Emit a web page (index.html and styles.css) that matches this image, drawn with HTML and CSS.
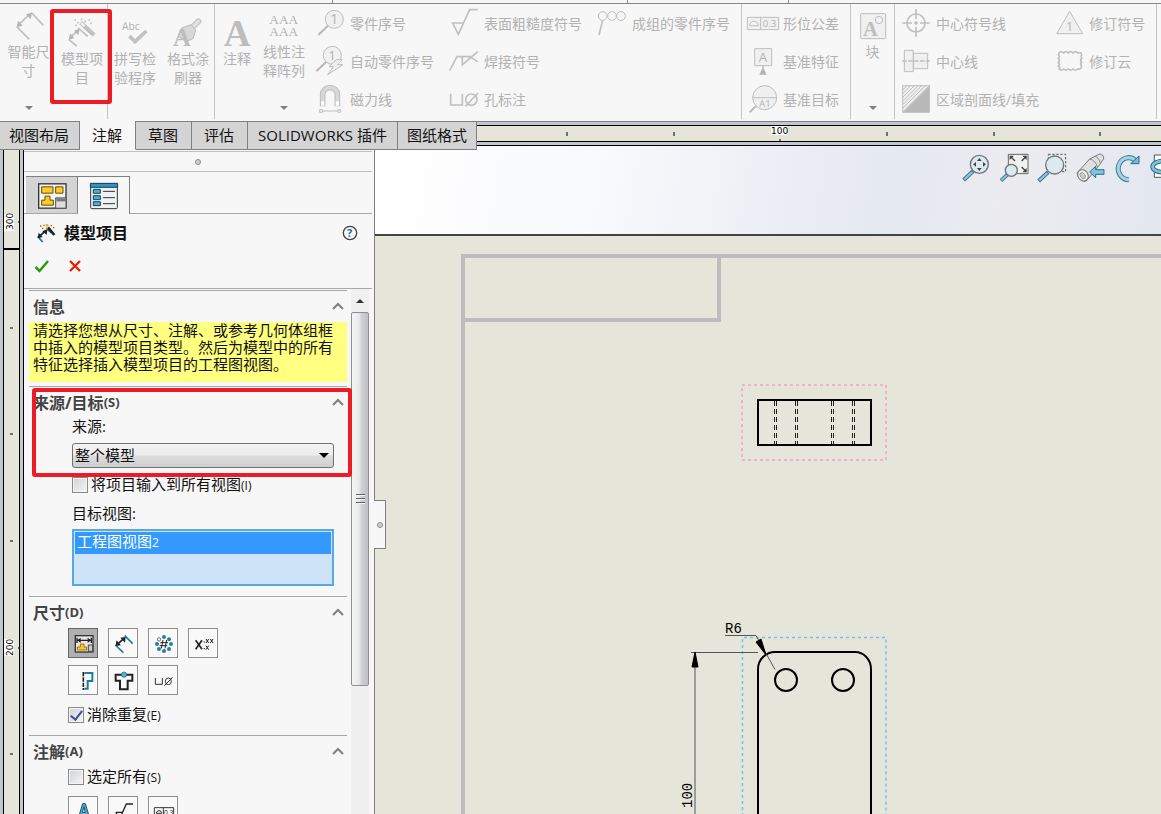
FILE: index.html
```
<!DOCTYPE html>
<html lang="zh-CN">
<head>
<meta charset="utf-8">
<title>模型项目</title>
<link rel="stylesheet" href="styles.css">
</head>
<body>
<div class="app">
  <div class="menu-edge"><i></i><i></i><i></i><i></i></div>

  <div class="ribbon">
    <div class="group">
      <button class="big drop size-tool"><svg viewBox="40 33 90 90"><g class="line"><path d="M92 38L128 76M48 80L86 118M54 74L88 42"/></g><path class="fill" d="M48 82l4-20 14 15zM94 38l-4 20-14-15z"/></svg><span>智能尺寸</span></button>
      <button class="big model-tool"><svg viewBox="202 54 90 90"><g class="line"><path d="M207 118l24 20M236 84l28 25M212 112l22-20"/></g><path class="fill" d="M207 120l4-20 13 14zM240 86l-4 20-13-14z"/><path d="M243 68l40 37" stroke="#bdbdbd" stroke-width="13"/><path d="M244 69l11 10" stroke="#ececec" stroke-width="8"/><path d="M258 79l24 22" stroke="#d4d4d4" stroke-width="3"/><g class="dots"><path d="M224 60h5M232 68h5M243 58h5M254 64h5M266 60h5M272 70h5M226 76h5"/></g></svg><span>模型项目</span></button>
    </div>
    <div class="group">
      <button class="big"><svg viewBox="363 54 90 90"><text x="369" y="89" font-size="31">Abc</text><path d="M391 108l17 17 34-32" fill="none" stroke="#c2c2c2" stroke-width="11"/></svg><span>拼写检验程序</span></button>
      <button class="big brush-tool"><svg viewBox="522 54 90 90"><path d="M584 78l14-14" stroke="#c4c4c4" stroke-width="18" stroke-linecap="round"/><path d="M584 78l14-14" stroke="#e2e2e2" stroke-width="10" stroke-linecap="round"/><path d="M548 84l28-10 14 16-8 26-20 8-24-14z" fill="#d8d8d8" stroke="#bbb" stroke-width="3"/><text class="serif" x="522" y="139" font-size="74">A</text></svg><span>格式涂刷器</span></button>
    </div>
    <div class="group wide">
      <button class="big note-tool"><svg viewBox="669 54 90 90"><text class="serif" x="674" y="137" font-size="112">A</text></svg><span>注释</span></button>
      <button class="big drop array-tool"><svg viewBox="810 33 90 90"><g class="serif thin" font-size="40"><text x="811" y="73">AAA</text><text x="811" y="109">AAA</text></g></svg><span>线性注释阵列</span></button>
      <div class="stack lead">
        <button class="tool"><svg viewBox="48 27 90 90"><path d="M88 79L58 108" class="heavy"/><circle class="disc" cx="106" cy="61" r="27"/><text x="94" y="76" font-size="42">1</text></svg>零件序号</button>
        <button class="tool"><svg viewBox="48 141 90 90"><path d="M82 188L52 217" class="heavy"/><circle class="disc" cx="100" cy="169" r="27"/><text x="88" y="182" font-size="40">1</text><path class="disc" d="M112 182h18l-14 15h16l-46 30 18-24h-14z"/></svg>自动零件序号</button>
        <button class="tool"><svg viewBox="48 255 90 90"><path d="M71 322V286a22 20 0 0 1 44 0v36" fill="none" stroke="#bdbdbd" stroke-width="17"/><path d="M71 308V286a22 20 0 0 1 44 0v22" fill="none" stroke="#d8d8d8" stroke-width="11"/><path d="M66 307h10v13H66zM110 307h10v13h-10z" fill="#fff"/><path class="line3" d="M62 332h8v8h-8zM117 332h8v8h-8zM70 336h47"/></svg>磁力线</button>
      </div>
      <div class="stack">
        <button class="tool"><svg viewBox="450 27 90 90"><path class="line" d="M458 72h36M462 74l16 32 34-74h24"/></svg>表面粗糙度符号</button>
        <button class="tool"><svg viewBox="450 141 90 90"><path class="line" d="M452 215l22-42h46M490 174v24l46-40M514 174l22 14"/></svg>焊接符号</button>
        <button class="tool"><svg viewBox="450 255 90 90"><path class="line" d="M455 284v34h35v-34"/><circle class="line" cx="517" cy="302" r="17"/><path class="line" d="M499 322l38-40"/></svg>孔标注</button>
      </div>
      <div class="stack">
        <button class="tool"><svg viewBox="24 27 90 90"><path class="line" d="M41 64l-11 44"/><g class="line3"><circle cx="41" cy="51" r="13"/><circle cx="69" cy="51" r="13"/><circle cx="96" cy="51" r="13"/></g></svg>成组的零件序号</button>
      </div>
    </div>
    <div class="group wide lead">
      <div class="stack">
        <button class="tool"><svg viewBox="477 27 90 90"><path class="disc" d="M475 55h94v37h-94zM515 55v37M482 80h26a13 13 0 0 0-26 0z"/><text x="521" y="84" font-size="29">0.3</text></svg>形位公差</button>
        <button class="tool"><svg viewBox="477 141 90 90"><path class="disc" d="M497 149h51v51h-51z"/><text x="509" y="190" font-size="40">A</text><path class="fill" d="M520 200h4v8l9 19h-22l9-19z"/></svg>基准特征</button>
        <button class="tool"><svg viewBox="477 255 90 90"><path class="heavy" d="M500 322l-18 18"/><circle class="disc" cx="527" cy="296" r="36"/><path class="line3" d="M491 296h72"/><text x="511" y="324" font-size="28">A1</text></svg>基准目标</button>
      </div>
    </div>
    <div class="group">
      <button class="big drop block-tool"><svg viewBox="-3 33 90 90"><rect class="disc" x="5" y="41" width="75" height="75" rx="3"/><text class="serif" x="12" y="108" font-size="62">A</text><circle class="disc" cx="60" cy="60" r="11"/></svg><span>块</span></button>
    </div>
    <div class="group wide lead">
      <div class="stack">
        <button class="tool"><svg viewBox="129 27 90 90"><circle class="line" cx="174" cy="72" r="27"/><path class="line" d="M174 30v30M174 84v30M133 72h29M186 72h29M174 66v12M168 72h12"/></svg>中心符号线</button>
        <button class="tool"><svg viewBox="129 141 90 90"><path class="disc" d="M139 154h27v64h-27zM166 163h43v46h-43z"/><path class="line" d="M132 186h84" stroke-dasharray="14 4"/></svg>中心线</button>
        <button class="tool"><svg viewBox="129 255 90 90"><rect class="disc" x="134" y="260" width="80" height="80"/><path d="M214 262v77h-78z" fill="#b9b9b9"/><path class="line3" d="M135 272l12-12M135 283l23-23M135 294l34-34M135 305l45-45M135 316l56-56M135 327l67-67M135 338l78-78"/></svg>区域剖面线/填充</button>
      </div>
      <div class="stack">
        <button class="tool"><svg viewBox="585 27 90 90"><path class="disc" d="M632 37l39 67h-78z"/><text x="621" y="95" font-size="38">1</text></svg>修订符号</button>
        <button class="tool"><svg viewBox="585 141 90 90"><path class="line" d="M600 162q7-8 14 0q7-8 14 0q7-8 14 0q7-8 14 0q10-4 12 4q-4 6 0 12q-6 6 0 12q-6 6 0 12q-2 10-12 8q-7 7-14 0q-7 7-14 0q-7 7-14 0q-7 7-14 0q6-5-2-8q6-6 0-12q6-6 0-12q6-6 0-12z"/></svg>修订云</button>
      </div>
    </div>
  </div>

  <div class="tab-row">
    <div class="tabs" role="tablist">
      <button role="tab">视图布局</button>
      <button role="tab" class="on">注解</button>
      <button role="tab">草图</button>
      <button role="tab">评估</button>
      <button role="tab" class="addins">SOLIDWORKS 插件</button>
      <button role="tab">图纸格式</button>
    </div>
    <div class="h-ruler">
      <svg><path d="M90 6v4M197 6v4M303 0v2M303 13v2M410 6v4M517 6v4M623 6v4" stroke="#000" stroke-width="1"/><rect x="294" y="0" width="16" height="9" fill="#fff"/><text x="294" y="8">100</text></svg>
    </div>
  </div>

  <div class="main">
    <div class="v-ruler">
      <svg><path d="M6 182h3M6 288h3M6 395h3M6 608h3M0 76h1M14 76h1M0 502h1M14 502h1" stroke="#000"/><path d="M0 103h15" stroke="#000" stroke-width="2"/><path d="M0 68h10v17H0zM0 493h10v17H0z" fill="#fff"/><text transform="translate(9 84) rotate(-90)">300</text><text transform="translate(9 510) rotate(-90)">200</text></svg>
    </div>

    <div class="panel">
      <div class="grip"><i class="dot"></i></div>
      <div class="panel-tabs">
        <button aria-label="FeatureManager"><svg viewBox="110 110 90 80" width="30" height="27"><rect x="115" y="115" width="82" height="73" fill="#f4f4f4" stroke="#333" stroke-width="4"/><g fill="#ffcd2b" stroke="#6b4a00" stroke-width="3"><path d="M124 124h34v19h-34zM166 124h22v19h-22zM124 179v-15h10v-12h15v12h10v15z"/></g><path d="M166 188v-31h31v31z" fill="#ddd" stroke="#555" stroke-width="3"/><path d="M168 163h28" stroke="#777" stroke-width="9"/></svg></button>
        <button aria-label="PropertyManager" class="on"><svg viewBox="267 108 90 84" width="30" height="28"><rect x="272" y="113" width="80" height="75" rx="3" fill="#eef2f2" stroke="#333" stroke-width="3"/><path d="M271 112h82v12h-82z" fill="#3b8fb5" stroke="#0d4866" stroke-width="3"/><path d="M280 130h21v12h-21zM280 149h21v12h-21zM280 167h21v12h-21z" fill="#53a9cc" stroke="#0d4866" stroke-width="3"/><path d="M309 136h36M309 155h36M309 173h36" stroke="#333" stroke-width="3"/></svg></button>
      </div>
      <div class="title-row">
        <svg viewBox="108 232 60 60" width="20" height="20"><path d="M113 272l15 17M139 248l16 14" stroke="#1d7397" stroke-width="5"/><path d="M118 272l20-18" stroke="#222" stroke-width="5"/><path d="M113 278l3-17 12 13zM142 252l-2 16-13-12z" fill="#222"/><path d="M144 245l19 23" stroke="#222" stroke-width="8"/><path d="M137 239h8M139 246h4" stroke="#f0a020" stroke-width="6"/><path d="M120 241h4M126 248h4M130 239h4M152 240h4M159 246h4" stroke="#b5500c" stroke-width="4"/></svg>
        <h1>模型项目</h1>
        <button class="help" aria-label="帮助"><svg viewBox="0 0 16 16" width="16" height="16"><circle cx="8" cy="8" r="6.7" fill="#f7f9fa" stroke="#444" stroke-width="1.3"/><text x="5" y="12" font-size="11" font-weight="bold" fill="#1b6f97">?</text></svg></button>
      </div>
      <div class="action-row">
        <button aria-label="确定"><svg viewBox="0 0 16 14" width="16" height="14"><path d="M1.500 8l4 4L14 2" fill="none" stroke="#2c9a10" stroke-width="2.500"/></svg></button>
        <button aria-label="取消"><svg viewBox="0 0 14 14" width="14" height="14"><path d="M2 2l10 10M12 2L2 12" stroke="#e02408" stroke-width="2.400"/></svg></button>
      </div>

      <div class="scroller">
        <div class="sections">
          <section>
            <h2>信息<svg class="chev" viewBox="0 0 12 8"><path d="M1 7l5-5 5 5"/></svg></h2>
            <p class="message">请选择您想从尺寸、注解、或参考几何体组框中插入的模型项目类型。然后为模型中的所有特征选择插入模型项目的工程图视图。</p>
          </section>
          <section class="source">
            <h2>来源/目标<small>(S)</small><svg class="chev" viewBox="0 0 12 8"><path d="M1 7l5-5 5 5"/></svg></h2>
            <div class="fields">
              <label class="caption" for="src">来源:</label>
              <div class="combo"><select id="src"><option>整个模型</option></select></div>
              <label class="check all-views"><input type="checkbox"><span>将项目输入到所有视图<small>(I)</small></span></label>
              <span class="caption target" id="target">目标视图:</span>
              <ul class="list" role="listbox" aria-labelledby="target"><li role="option" aria-selected="true">工程图视图<small>2</small></li></ul>
            </div>
            <div class="mark mark-source"></div>
          </section>
          <section>
            <h2>尺寸<small>(D)</small><svg class="chev" viewBox="0 0 12 8"><path d="M1 7l5-5 5 5"/></svg></h2>
            <div class="toggles dims">
              <button class="on" aria-label="为工程图标注"><svg viewBox="204 24 90 90"><rect x="223" y="44" width="53" height="49" fill="#e6e6e2" stroke="#333" stroke-width="4"/><path d="M228 50v16M271 50v16M230 58h40" stroke="#222" stroke-width="4"/><path d="M229 58l10-8v16zM270 58l-10-8v16z" fill="#222"/><path d="M229 87v-9h9v-9h11v9h8v9z" fill="#ffc81e" stroke="#6b4a00" stroke-width="2"/><path d="M262 72h13v19h-13z" fill="#ccc" stroke="#444" stroke-width="3"/></svg></button>
              <button aria-label="没为工程图标注"><svg viewBox="324 24 90 90"><path d="M343 72l24 23M371 44l24 24" stroke="#1d7ca3" stroke-width="5"/><path d="M349 70l20-18" stroke="#222" stroke-width="5"/><path d="M344 75l2-17 14 15zM374 48l-2 17-14-15z" fill="#222"/></svg></button>
              <button aria-label="阵列实例数"><svg viewBox="447 24 90 90"><g fill="#2a7da2"><circle cx="492" cy="48" r="6"/><circle cx="507" cy="55" r="6"/><circle cx="513" cy="69" r="6"/><circle cx="507" cy="84" r="6"/><circle cx="492" cy="90" r="6"/><circle cx="477" cy="84" r="6"/><circle cx="471" cy="69" r="6"/></g><circle cx="477" cy="55" r="5" fill="#fff" stroke="#333" stroke-width="2"/><path d="M489 57l-5 25M500 57l-5 25M481 65h23M479 74h23" stroke="#222" stroke-width="3"/></svg></button>
              <button aria-label="公差"><svg viewBox="567 24 90 90"><path d="M587 58l19 27M606 58l-19 27" stroke="#222" stroke-width="5"/><path d="M611 63h4M611 83h4M618 54l8 12M626 54l-8 12M631 54l8 12M639 54l-8 12M618 74l8 12M626 74l-8 12" stroke="#222" stroke-width="3"/></svg></button>
              <button aria-label="异型孔向导轮廓"><svg viewBox="204 135 90 90"><path d="M247 153v54" stroke="#222" stroke-width="5" stroke-dasharray="13 3"/><path d="M250 156h24v24h-14v23h-10" fill="none" stroke="#1d7ca3" stroke-width="6"/></svg></button>
              <button aria-label="异型孔向导位置"><svg viewBox="324 135 90 90"><path d="M344 161h50v18h-14v26h-23v-26h-13z" fill="none" stroke="#222" stroke-width="6"/><circle cx="369" cy="161" r="8" fill="#55aed2" stroke="#1b6381" stroke-width="2"/></svg></button>
              <button aria-label="孔标注"><svg viewBox="447 135 90 90"><path d="M466 171v19h21v-19" fill="none" stroke="#333" stroke-width="3"/><ellipse cx="505" cy="181" rx="9" ry="10" fill="none" stroke="#333" stroke-width="3"/><path d="M493 194l25-25" stroke="#333" stroke-width="3"/></svg></button>
            </div>
            <label class="check dedupe"><input type="checkbox" checked><span>消除重复<small>(E)</small></span></label>
          </section>
          <section>
            <h2>注解<small>(A)</small><svg class="chev" viewBox="0 0 12 8"><path d="M1 7l5-5 5 5"/></svg></h2>
            <label class="check pick-all"><input type="checkbox"><span>选定所有<small>(S)</small></span></label>
            <div class="toggles notes">
              <button aria-label="注释"><svg viewBox="204 528 90 90"><path d="M232 591l13-43h8l13 43h-9l-3-10h-11l-3 10zM249 557l-5 17h9z" fill="#55aed2" stroke="#1b516b" stroke-width="3" fill-rule="evenodd"/></svg></button>
              <button aria-label="表面粗糙度"><svg viewBox="324 528 90 90"><path d="M344 574h20M345 575l10 20 21-46h20" fill="none" stroke="#222" stroke-width="4"/></svg></button>
              <button aria-label="形位公差"><svg viewBox="447 528 90 90"><path d="M463 560h58v26h-58zM490 560v26M469 577h16a8 8 0 0 0-16 0z" fill="none" stroke="#333" stroke-width="3"/><text x="492" y="581" font-size="20" fill="#222">0.3</text></svg></button>
            </div>
          </section>
        </div>
        <div class="scrollbar"><span class="up"></span><span class="thumb"><i></i></span></div>
      </div>
      <button class="handle" aria-label="收起面板"><i class="dot"></i></button>
    </div>

    <div class="view">
      <div class="view-head">
        <div class="hud">
          <button aria-label="整屏显示全图"><svg viewBox="66 39 90 90"><use href="#lens-handle"/><circle cx="118" cy="73" r="27" class="glass"/><path fill="#444" d="M118 54l7 9h-14zM118 93l7-9h-14zM99 73l9-7v14zM138 73l-9-7v14z"/></svg></button>
          <button aria-label="局部放大"><svg viewBox="180 39 90 90"><path d="M205 43h59v58h-59z" fill="#f1f1f1" stroke="#666" stroke-width="3"/><path d="M211 49l14 14M259 49l-14 14M259 95l-14-14" stroke="#444" stroke-width="4"/><path fill="#444" d="M209 47h13l-13 13zM260 47h-13l13 13zM260 97h-13l13-13z"/><path d="M203 103l-20 19" stroke="#3a6d88" stroke-width="11"/><path d="M202 104l-18 17" stroke="#8cc4dd" stroke-width="6"/><circle cx="214" cy="91" r="18" class="glass"/></svg></button>
          <button aria-label="区域放大"><svg viewBox="294 39 90 90"><path d="M325 43h52v52h-52z" fill="none" stroke="#555" stroke-width="3" stroke-dasharray="7 5"/><path d="M324 97l-28 26" stroke="#3a6d88" stroke-width="12"/><path d="M322 99l-24 22" stroke="#8cc4dd" stroke-width="7"/><circle cx="344" cy="75" r="27" class="glass"/></svg></button>
          <button aria-label="上一视图"><svg viewBox="408 39 90 90"><path d="M411 99l38-42 30-15q12 0 12 14l-14 21-38 46q-22 4-28-24z" fill="#e0e0e0" stroke="#777" stroke-width="3"/><path d="M449 57q18 4 23 24M462 48q16 5 18 20" fill="none" stroke="#888" stroke-width="3"/><ellipse cx="429" cy="106" rx="15" ry="18" transform="rotate(-35 429 106)" fill="#eee" stroke="#777" stroke-width="3"/><ellipse cx="428" cy="107" rx="7" ry="10" transform="rotate(-35 428 107)" fill="#ccc" stroke="#888" stroke-width="2"/><path d="M449 96l18-17v10h25v14h-25v10z" fill="#7fc3df" stroke="#2f6d8b" stroke-width="3"/></svg></button>
          <button aria-label="旋转视图"><svg viewBox="522 39 90 90"><path d="M586 61a31 33 0 1 0-19 58" fill="none" stroke="#3d7d9c" stroke-width="15"/><path d="M586 61a31 33 0 1 0-19 58" fill="none" stroke="#a4d3e6" stroke-width="9"/><path d="M597 48v23h-25z" fill="#78b9d5" stroke="#2f6d8b" stroke-width="3"/></svg></button>
          <button aria-label="三维视图" class="cut"><svg viewBox="636 39 90 90"><path d="M643 45h60v67h-60z" fill="#fff" stroke="#555" stroke-width="3"/><ellipse cx="670" cy="80" rx="32" ry="17" fill="none" stroke="#2f6d8b" stroke-width="14"/><ellipse cx="670" cy="80" rx="32" ry="17" fill="none" stroke="#7fc3df" stroke-width="8"/></svg></button>
        </div>
      </div>
      <svg class="sheet">
        <defs><g id="lens-handle"><path d="M99 94l-28 26" stroke="#3a6d88" stroke-width="12"/><path d="M97 96l-24 22" stroke="#8cc4dd" stroke-width="7"/></g></defs>
        <g transform="translate(-375 -236)">
          <path d="M463 900V256H4000M719 256v64H463" fill="none" stroke="#bdbdbf" stroke-width="4"/>
          <path d="M742 385h144v75H742z" fill="none" stroke="#f5a3c7" stroke-width="1.500" stroke-dasharray="3 3"/>
          <path d="M758 400h113v45H758z" fill="none" stroke="#000" stroke-width="2"/>
          <path d="M774.500 401v43M776.500 401v43M795.500 401v43M797.500 401v43M831.500 401v43M833.500 401v43M852.500 401v43M854.500 401v43" stroke="#222" stroke-dasharray="5 3"/>
          <path d="M742.500 900V637.500h143.500V900" fill="none" stroke="#7dbbf2" stroke-width="1.500" stroke-dasharray="3 3"/>
          <path d="M758 900V669a17 17 0 0 1 17-17h80a16 17 0 0 1 16 17V900" fill="none" stroke="#000" stroke-width="2"/>
          <circle cx="786" cy="680" r="11" fill="none" stroke="#000" stroke-width="2"/>
          <circle cx="843" cy="680" r="11" fill="none" stroke="#000" stroke-width="2"/>
          <path d="M691 652.500h67M695 654V900M725 635.500h31l19 34" fill="none" stroke="#555"/>
          <path d="M695 652l3 15h-6zM766 655l-10-13 5-3z" fill="#000" stroke="#000"/>
          <text x="725" y="633">R6</text>
          <text transform="translate(692 808) rotate(-90)">100</text>
        </g>
      </svg>
    </div>
  </div>
  <div class="mark mark-tool"></div>
</div>
</body>
</html>
```
FILE: styles.css
```
* { box-sizing: border-box; }

body {
  margin: 0;
  font-family: "Open Sans", "Noto Sans CJK SC", sans-serif;
  font-size: 15px;
  color: #111;
  background: #f7f7f7;
}

button {
  margin: 0;
  padding: 0;
  border: 0;
  background: none;
  font: inherit;
  color: inherit;
}

svg { display: block; overflow: visible; flex: none; }
h1, h2, p, ul { margin: 0; padding: 0; }
small { font-size: 12px; }

.app {
  position: relative;
  display: flex;
  flex-direction: column;
  height: 100vh;
  overflow: hidden;
}

/* Window edge above the ribbon */
.menu-edge {
  flex: none;
  display: grid;
  grid-template-columns: 333px 295px 161px 1fr;
  height: 4px;
  border-bottom: 1px solid #888;
}
.menu-edge i { border-right: 1px solid #888; }
.menu-edge i:last-child { border: 0; }

/* Ribbon */
.ribbon {
  flex: none;
  display: flex;
  height: 117px;
  color: #b2b2b2;
  font-size: 14px;
  line-height: 19px;
  white-space: nowrap;
}
.group {
  display: flex;
  margin-bottom: 2px;
  border-right: 1px solid #c4c4c4;
}
.group.wide { padding-right: 11px; }
.group.lead, .stack.lead { padding-left: 6px; }
.stack {
  display: grid;
  grid-template-rows: repeat(3, 38px);
}
.stack + .stack { margin-left: 15px; }

.tool { display: flex; align-items: center; gap: 5px; }
.tool svg, .big svg { width: 30px; height: 30px; }

.big {
  display: flex;
  flex-direction: column;
  align-items: center;
  gap: 1px;
  width: 54px;
  padding-top: 14px;
}
.big span { width: 42px; white-space: normal; text-align: center; }
.big.drop { padding-top: 7px; }
.big.drop::after {
  content: "";
  margin: auto 0 9px;
  border: 4px solid transparent;
  border-top-color: #808080;
  border-bottom: 0;
}
.size-tool { width: 57px; }
.model-tool { width: 50px; }
.brush-tool { width: 52px; }
.note-tool { width: 44px; }
.block-tool { width: 43px; }
.array-tool { width: 50px; }

.ribbon svg text { fill: #b2b2b2; }
.ribbon svg .serif {
  font-family: "Liberation Serif", serif;
  font-weight: bold;
  fill: #bdbdbd;
}
.ribbon svg .thin { font-weight: normal; }
.ribbon .line { fill: none; stroke: #c0c0c0; stroke-width: 5; }
.ribbon .line3 { fill: none; stroke: #bdbdbd; stroke-width: 3; }
.ribbon .heavy { fill: none; stroke: #b8b8b8; stroke-width: 6; }
.ribbon .disc { fill: #f0f0f0; stroke: #bdbdbd; stroke-width: 3; }
.ribbon .fill { fill: #b5b5b5; }
.ribbon .dots { stroke: #c4c4c4; stroke-width: 5; }

/* Tabs and horizontal ruler */
.tab-row {
  flex: none;
  display: flex;
  height: 25px;
}
.tabs {
  position: relative;
  z-index: 2;
  display: flex;
  height: 29px;
  border-top: 1px solid #808080;
}
.tabs button {
  padding: 0 13px 0 12px;
  border-right: 1px solid #808080;
  border-bottom: 1px solid #808080;
  background: #d4d4d4;
  line-height: 27px;
  white-space: nowrap;
}
.tabs button:first-child { padding: 0 10px 0 9px; }
.tabs button:last-child { padding: 0 9px; }
.tabs .addins { padding: 0 10px; }
.tabs .on {
  margin-top: -1px;
  border-bottom-color: #f7f7f7;
  background: #f7f7f7;
}
.h-ruler {
  flex: 1;
  min-width: 0;
  padding: 3px 0;
  border-top: 1px solid #808080;
  border-bottom: 1px solid #000;
  background: #c3c7cf;
}
.h-ruler svg {
  width: 100%;
  height: 17px;
  border: solid #000;
  border-width: 1px 0;
  background: #e5e5da;
}
.h-ruler, .v-ruler { font-family: "DejaVu Sans", sans-serif; font-size: 9px; overflow: hidden; }

.main {
  flex: 1;
  display: flex;
  min-height: 0;
}
.v-ruler {
  flex: none;
  width: 24px;
  padding: 0 3px;
  border-right: 1px solid #000;
  background: #c3c7cf;
}
.v-ruler svg {
  width: 17px;
  height: 100%;
  border: solid #000;
  border-width: 0 1px;
  background: #e5e5da;
}

/* Property panel */
.panel {
  position: relative;
  z-index: 1;
  flex: none;
  display: flex;
  flex-direction: column;
  width: 351px;
  padding: 5px 2px 0 0;
  border-right: 1px solid #808080;
}
.dot {
  width: 6px;
  height: 6px;
  border: 1px solid #8c8c8c;
  border-radius: 50%;
  background: #d0d0d0;
}
.grip {
  flex: none;
  display: flex;
  align-items: center;
  justify-content: center;
  height: 21px;
  border: solid #c0c0c0;
  border-width: 1px 0;
}
.panel-tabs {
  flex: none;
  display: flex;
  height: 42px;
  padding: 4px 0 0 2px;
  border-bottom: 1px solid #a8a8a8;
}
.panel-tabs button {
  display: grid;
  place-items: center;
  width: 52px;
  border: solid #808080;
  border-width: 1px 1px 0 0;
  background: #d4d4d4;
}
.panel-tabs .on { margin-bottom: -1px; background: #f7f7f7; }

.title-row {
  flex: none;
  display: flex;
  align-items: center;
  height: 37px;
  padding: 0 14px 0 12px;
}
.title-row h1 { margin-left: 8px; font-size: 16px; line-height: 20px; }
.help { margin-left: auto; }
.action-row {
  flex: none;
  display: flex;
  align-items: center;
  gap: 18px;
  height: 38px;
  padding: 0 0 8px 10px;
  border-bottom: 1px solid #a8a8a8;
}

.scroller { flex: 1; display: flex; min-height: 0; overflow: hidden; }
.sections { flex: 1; padding: 1px 4px 0 5px; }
section { position: relative; border-top: 1px solid #a8a8a8; }
h2 {
  display: flex;
  align-items: center;
  height: 30px;
  padding: 0 3px 1px 4px;
  color: #444;
  font-size: 16px;
}
h2 small { font-size: 13px; }
.chev { width: 12px; height: 8px; margin-left: auto; }
.chev path { fill: none; stroke: #808080; stroke-width: 2; }

.message {
  min-height: 60px;
  margin: 1px 0 4px;
  padding: 0 12px 0 4px;
  background: #ffff80;
  line-height: 17px;
}
.fields {
  display: flex;
  flex-direction: column;
  padding: 0 13px 10px 43px;
}
.caption { line-height: 18px; }
.combo { position: relative; margin-top: 8px; }
.combo select {
  display: block;
  width: 100%;
  height: 25px;
  padding: 0 3px 1px 2px;
  border: 1px solid #707070;
  border-radius: 3px;
  appearance: none;
  background: linear-gradient(#f3f3f3, #ececec 48%, #dcdcdc 52%, #cfcfcf);
  font: inherit;
  color: #111;
}
.combo::after {
  content: "";
  position: absolute;
  top: 10px;
  right: 5px;
  border: 5px solid transparent;
  border-top-color: #000;
  border-bottom: 0;
}
.check {
  display: flex;
  align-items: center;
  gap: 3px;
  height: 16px;
  line-height: 16px;
  white-space: nowrap;
}
.check input {
  width: 16px;
  height: 16px;
  margin: 0;
  border: 1px solid #8a8a8a;
  outline: 1px solid #f4f4f4;
  outline-offset: -2px;
  appearance: none;
  background: linear-gradient(135deg, #cfd2d6, #f6f6f6);
}
.check input:checked {
  display: grid;
  place-items: center;
}
.check input:checked::before {
  content: "";
  width: 5px;
  height: 10px;
  margin-bottom: 3px;
  border: solid #3c4f9a;
  border-width: 0 2px 2px 0;
  transform: rotate(38deg);
}
.all-views { margin-top: 9px; }
.target { margin-top: 11px; }
.list {
  height: 57px;
  margin-top: 7px;
  padding: 1px;
  border: 2px solid #55aae0;
  background: #cfe3f8;
  list-style: none;
}
.list li {
  padding: 0 0 2px 2px;
  background: #3399ff;
  color: #fff;
  line-height: 18px;
}

.toggles {
  display: grid;
  grid-template-columns: repeat(4, 30px);
  gap: 7px 10px;
  padding-left: 39px;
}
.toggles button {
  display: grid;
  place-items: center;
  width: 30px;
  height: 30px;
  border: 1px solid #909090;
  background: #f9f9f9;
}
.toggles svg { width: 30px; height: 30px; }
.toggles .on { border-color: #666; background: #b0b0b0; }
.dims { margin-top: 1px; }
.dedupe { margin: 12px 0 12px 39px; }
.pick-all { margin: 3px 0 11px 39px; }

.scrollbar {
  display: flex;
  flex-direction: column;
  width: 18px;
  margin-right: 3px;
  background: #f0f0f0;
}
.up { display: grid; place-items: center; height: 23px; }
.up::before {
  content: "";
  border: 4px solid transparent;
  border-bottom-color: #333;
  border-top: 0;
}
.thumb {
  display: grid;
  place-items: center;
  height: 374px;
  border: 1px solid #8f8f8f;
  border-radius: 2px;
  background: linear-gradient(90deg, #f5f5f5, #e8e8ea 45%, #cfd0d4 60%, #bfc0c4);
}
.thumb i {
  width: 9px;
  height: 11px;
  background: repeating-linear-gradient(#606060 0 1px, #f4f4f4 1px 2px, transparent 2px 4px);
}
.handle {
  position: absolute;
  top: 354px;
  right: -12px;
  display: grid;
  place-items: center;
  width: 12px;
  height: 49px;
  border: 1px solid #808080;
  border-left: 0;
  background: #f7f7f7;
}

/* Drawing area */
.view {
  flex: 1;
  display: flex;
  flex-direction: column;
  min-width: 0;
  overflow: hidden;
  background: #e5e5da;
}
.view-head {
  flex: none;
  height: 90px;
  border-bottom: 2px solid #444;
  background: linear-gradient(100deg, #fff, #f8f9fc 30%, #eceef5 52%, #e4e8f1 66%, #ececf0 80%, #e3e7f0);
}
.hud {
  display: flex;
  justify-content: flex-end;
  gap: 8px;
  padding-top: 7px;
}
.hud button { width: 30px; height: 30px; }
.hud svg { width: 30px; height: 30px; }
.hud .cut { width: 9px; }
.glass { fill: #dce9ef; stroke: #6c7479; stroke-width: 4; }
.sheet {
  flex: 1;
  width: 100%;
  min-height: 0;
  font-family: "Liberation Mono", monospace;
  font-size: 14px;
}

/* Highlight frames */
.mark {
  position: absolute;
  z-index: 3;
  border: 4px solid #ed1c24;
  border-radius: 3px;
  pointer-events: none;
}
.mark-tool { top: 9px; left: 50px; width: 62px; height: 95px; }
.mark-source { top: 1px; left: 3px; right: -5px; height: 89px; }
```
